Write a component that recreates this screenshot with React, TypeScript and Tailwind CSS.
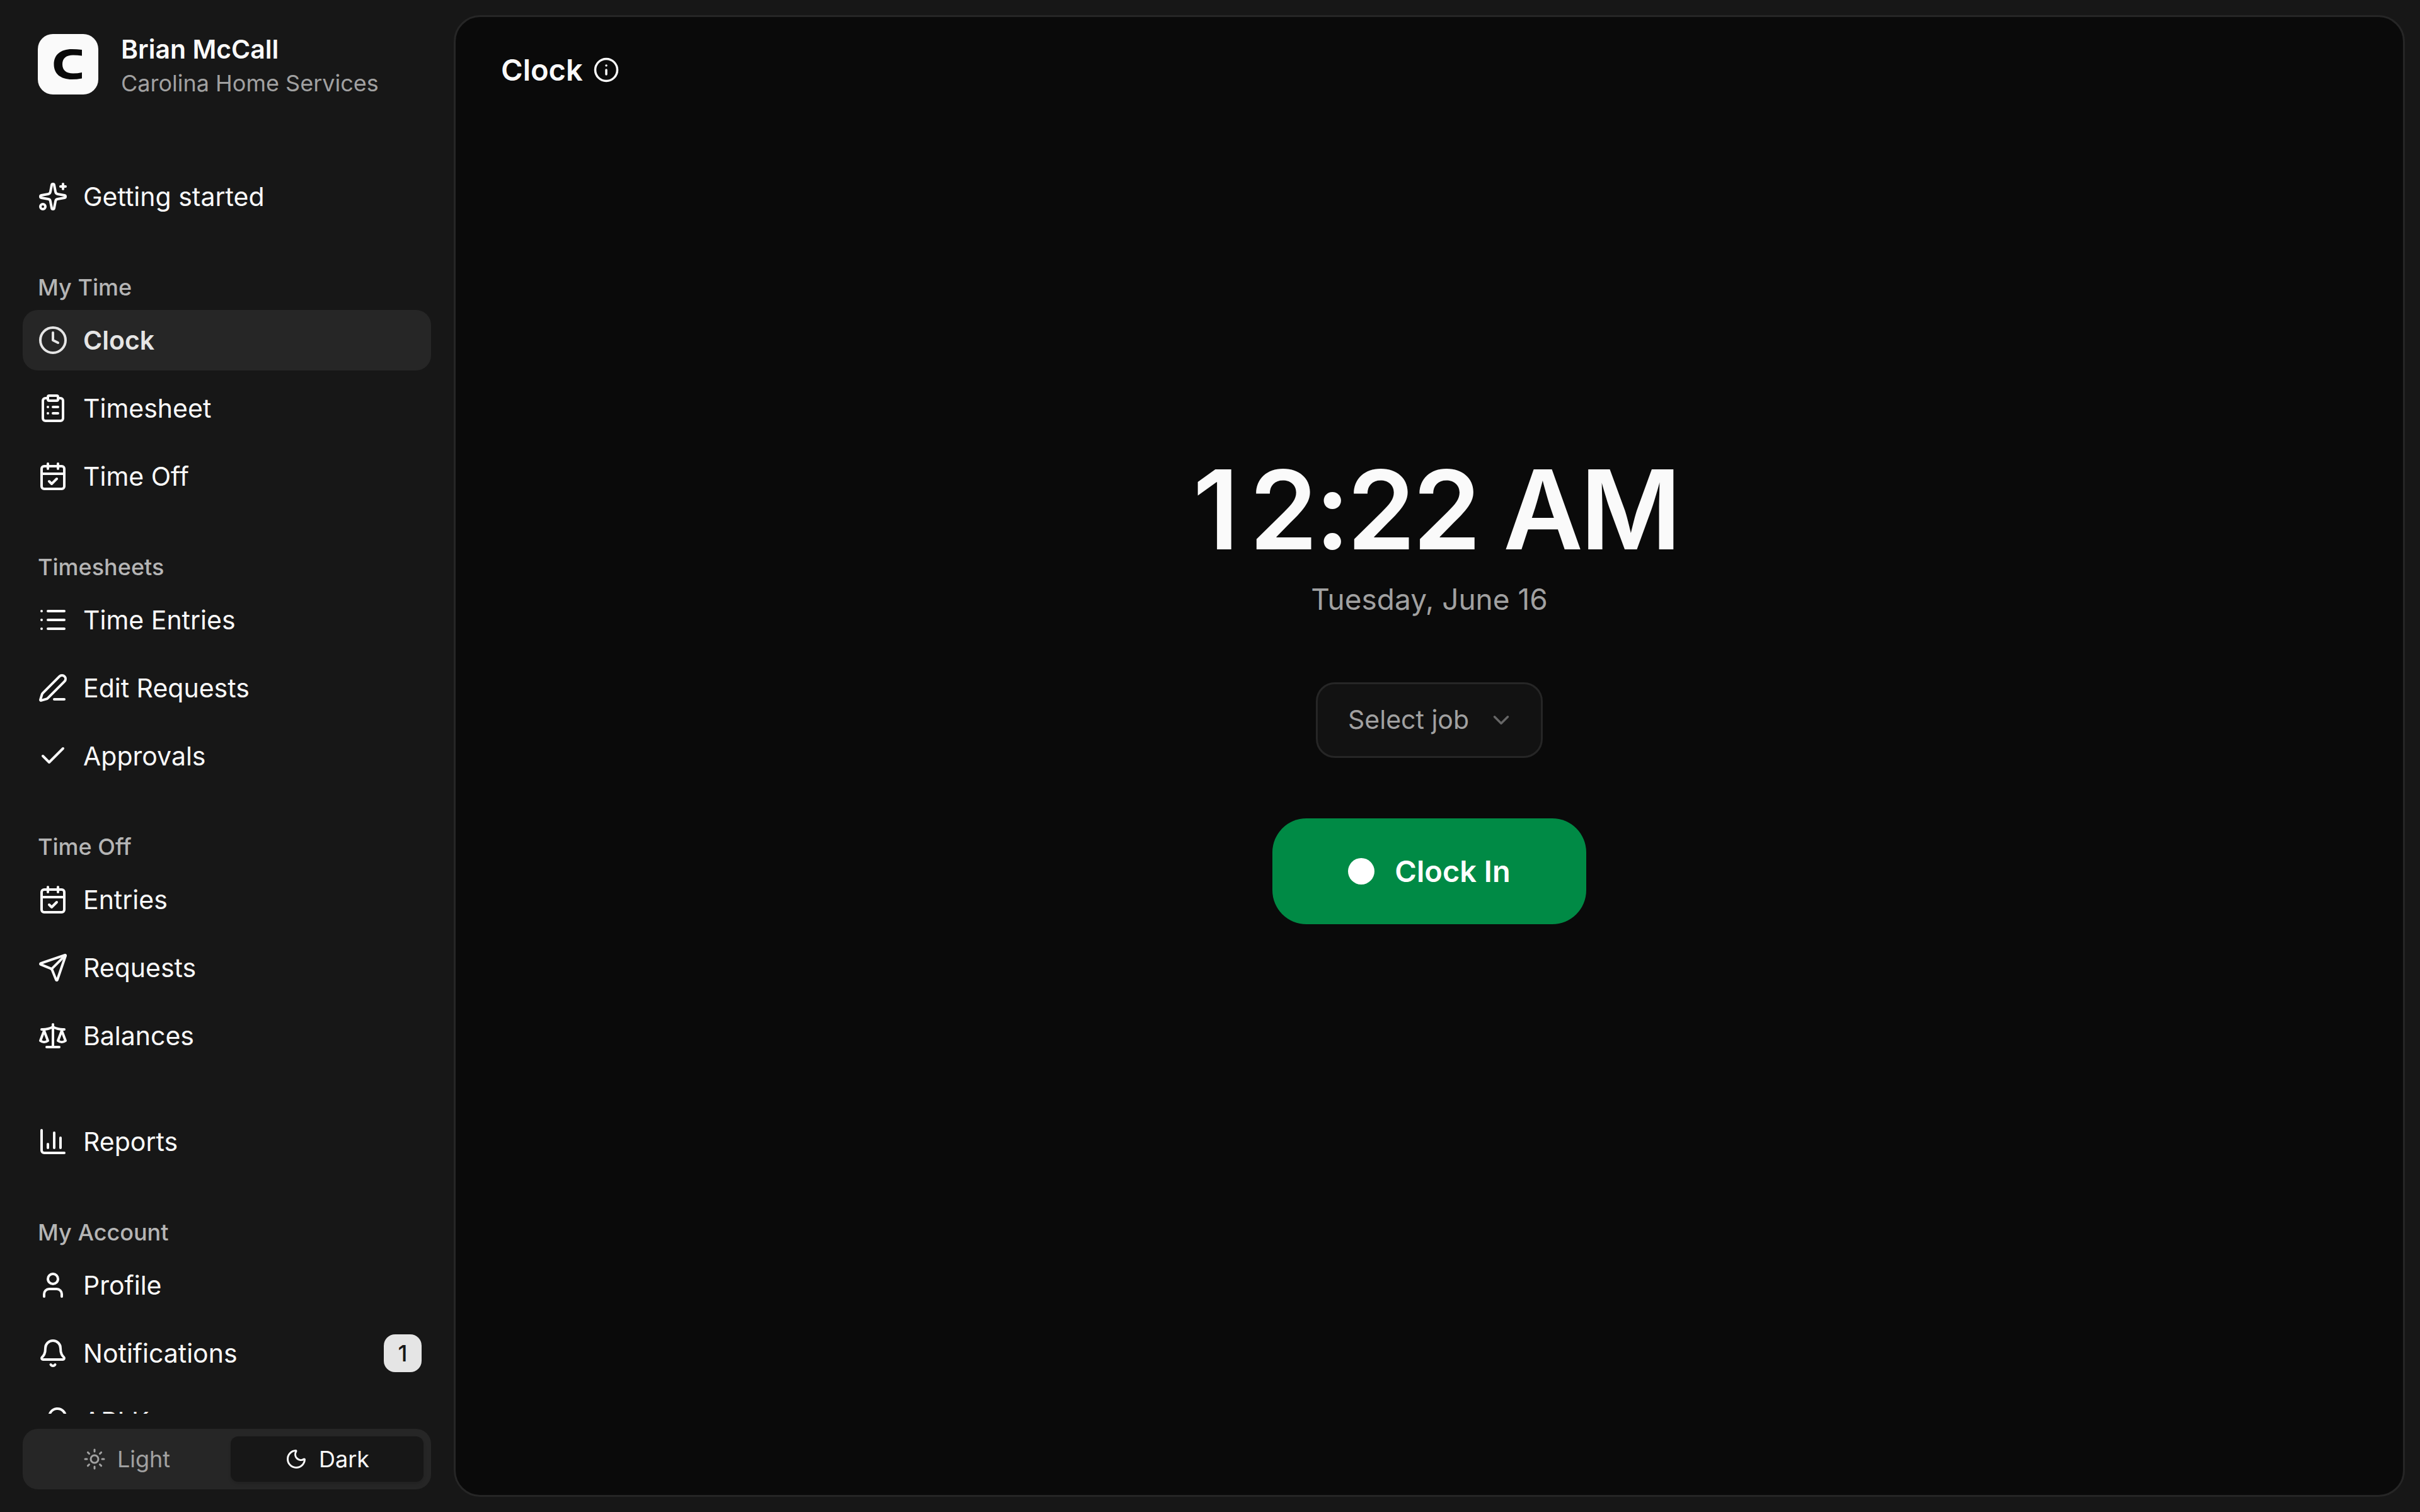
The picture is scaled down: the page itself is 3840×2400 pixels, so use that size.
import { useState } from "react";
import {
  Bell,
  CalendarCheck,
  ChartColumn,
  Check,
  ChevronDown,
  ClipboardList,
  Clock,
  Info,
  KeyRound,
  List,
  Moon,
  PenLine,
  Scale,
  Send,
  Sparkles,
  Sun,
  User,
  type LucideIcon,
} from "lucide-react";

type NavItem = { label: string; icon: LucideIcon; active?: boolean; badge?: number };
type NavGroup = { title?: string; items: NavItem[] };

const groups: NavGroup[] = [
  { items: [{ label: "Getting started", icon: Sparkles }] },
  {
    title: "My Time",
    items: [
      { label: "Clock", icon: Clock, active: true },
      { label: "Timesheet", icon: ClipboardList },
      { label: "Time Off", icon: CalendarCheck },
    ],
  },
  {
    title: "Timesheets",
    items: [
      { label: "Time Entries", icon: List },
      { label: "Edit Requests", icon: PenLine },
      { label: "Approvals", icon: Check },
    ],
  },
  {
    title: "Time Off",
    items: [
      { label: "Entries", icon: CalendarCheck },
      { label: "Requests", icon: Send },
      { label: "Balances", icon: Scale },
    ],
  },
  { items: [{ label: "Reports", icon: ChartColumn }] },
  {
    title: "My Account",
    items: [
      { label: "Profile", icon: User },
      { label: "Notifications", icon: Bell, badge: 1 },
      { label: "API Keys", icon: KeyRound },
    ],
  },
];

function Logo() {
  return (
    <span className="flex size-24 shrink-0 items-center justify-center rounded-3xl bg-neutral-50">
      <svg viewBox="0 0 96 96" className="size-24" fill="#0a0a0a" aria-hidden="true">
        <path d="M70 25Q62 24 54 24C36 24 25.500 33 25.500 48S36 72 54 72Q62 72 70 70.500V61Q63 62.500 56 62.500C45 62.500 39 57.500 39 48S45 33.500 56 33.500Q63 33.500 70 34.500Z" />
      </svg>
    </span>
  );
}

function NavLink({ item }: { item: NavItem }) {
  const Icon = item.icon;
  return (
    <a
      href="#"
      aria-current={item.active ? "page" : undefined}
      className={
        item.active
          ? "flex h-24 shrink-0 items-center gap-6 rounded-3xl bg-neutral-800 pr-[15px] pl-6 font-semibold text-neutral-200"
          : "flex h-24 shrink-0 items-center gap-6 rounded-3xl pr-[15px] pl-6 text-neutral-50"
      }
    >
      <Icon className="size-12 shrink-0" />
      <span className="flex-1 text-[41px] leading-[60px]">{item.label}</span>
      {item.badge !== undefined && (
        <span className="flex size-15 items-center justify-center rounded-[18px] bg-neutral-200 text-4xl font-medium text-neutral-900">
          {item.badge}
        </span>
      )}
    </a>
  );
}

function Sidebar() {
  const [theme, setTheme] = useState<"light" | "dark">("dark");
  const options = [
    { id: "light" as const, label: "Light", icon: Sun },
    { id: "dark" as const, label: "Dark", icon: Moon },
  ];
  return (
    <aside className="flex w-[720px] shrink-0 flex-col gap-6 px-9 pb-9">
      <div className="flex h-[240px] shrink-0 items-start gap-9 px-6 pt-[54px]">
        <Logo />
        <div className="flex flex-col">
          <span className="text-[41px] leading-[48px] font-semibold text-neutral-50">Brian McCall</span>
          <span className="mt-1.5 text-4xl leading-[48px] text-neutral-400">Carolina Home Services</span>
        </div>
      </div>
      <nav className="flex min-h-0 flex-1 flex-col gap-[72px] overflow-hidden">
        {groups.map((group, i) => (
          <section key={i} className="flex shrink-0 flex-col gap-3">
            {group.title && (
              <h2 className="px-6 text-4xl leading-[48px] font-medium text-[#b5b5b5]">{group.title}</h2>
            )}
            {group.items.map((item) => (
              <NavLink key={item.label} item={item} />
            ))}
          </section>
        ))}
      </nav>
      <div className="grid h-24 shrink-0 grid-cols-2 gap-3 rounded-3xl bg-neutral-800 p-3">
        {options.map(({ id, label, icon: Icon }) => (
          <button
            key={id}
            type="button"
            aria-pressed={theme === id}
            onClick={() => setTheme(id)}
            className={
              theme === id
                ? "flex items-center justify-center gap-[18px] rounded-xl bg-neutral-900 text-4xl text-neutral-50 shadow-md"
                : "flex items-center justify-center gap-[18px] rounded-xl text-4xl text-neutral-400"
            }
          >
            <Icon className="size-9" />
            {label}
          </button>
        ))}
      </div>
    </aside>
  );
}

export default function App() {
  return (
    <div className="flex h-screen bg-neutral-900 font-['Inter',sans-serif] text-neutral-50">
      <Sidebar />
      <main className="my-6 mr-6 flex min-w-0 flex-1 flex-col rounded-[42px] border-3 border-neutral-800 bg-neutral-950">
        <header className="flex h-[168px] shrink-0 items-center gap-4 px-[72px]">
          <h1 className="text-[47px] leading-[72px] font-semibold">Clock</h1>
          <button type="button" aria-label="About the clock">
            <Info className="size-[42px]" />
          </button>
        </header>
        <div className="flex min-h-0 flex-1 flex-col items-center justify-center pb-[382px]">
          <p className="text-[174px] leading-[180px] font-semibold tracking-tight">
            <span className="inline-block w-[110px] text-center">1</span>2:22 AM
          </p>
          <p className="mt-4 text-[46px] leading-[72px] text-neutral-400">Tuesday, June 16</p>
          <div className="relative mt-24">
            <select
              aria-label="Job"
              className="h-[120px] w-[360px] appearance-none rounded-[30px] border-3 border-neutral-800 bg-[#121212] pr-24 pl-12 text-[41px] text-[#a1a1a1]"
            >
              <option>Select job</option>
            </select>
            <ChevronDown className="pointer-events-none absolute top-[39px] right-[45px] size-[42px] text-[#666666]" />
          </div>
          <button
            type="button"
            className="mt-24 flex h-[168px] items-center gap-8 rounded-[54px] bg-[#008a45] px-[120px] text-[47px] font-semibold text-white"
          >
            <span className="size-[42px] rounded-full bg-white" />
            Clock In
          </button>
        </div>
      </main>
    </div>
  );
}
